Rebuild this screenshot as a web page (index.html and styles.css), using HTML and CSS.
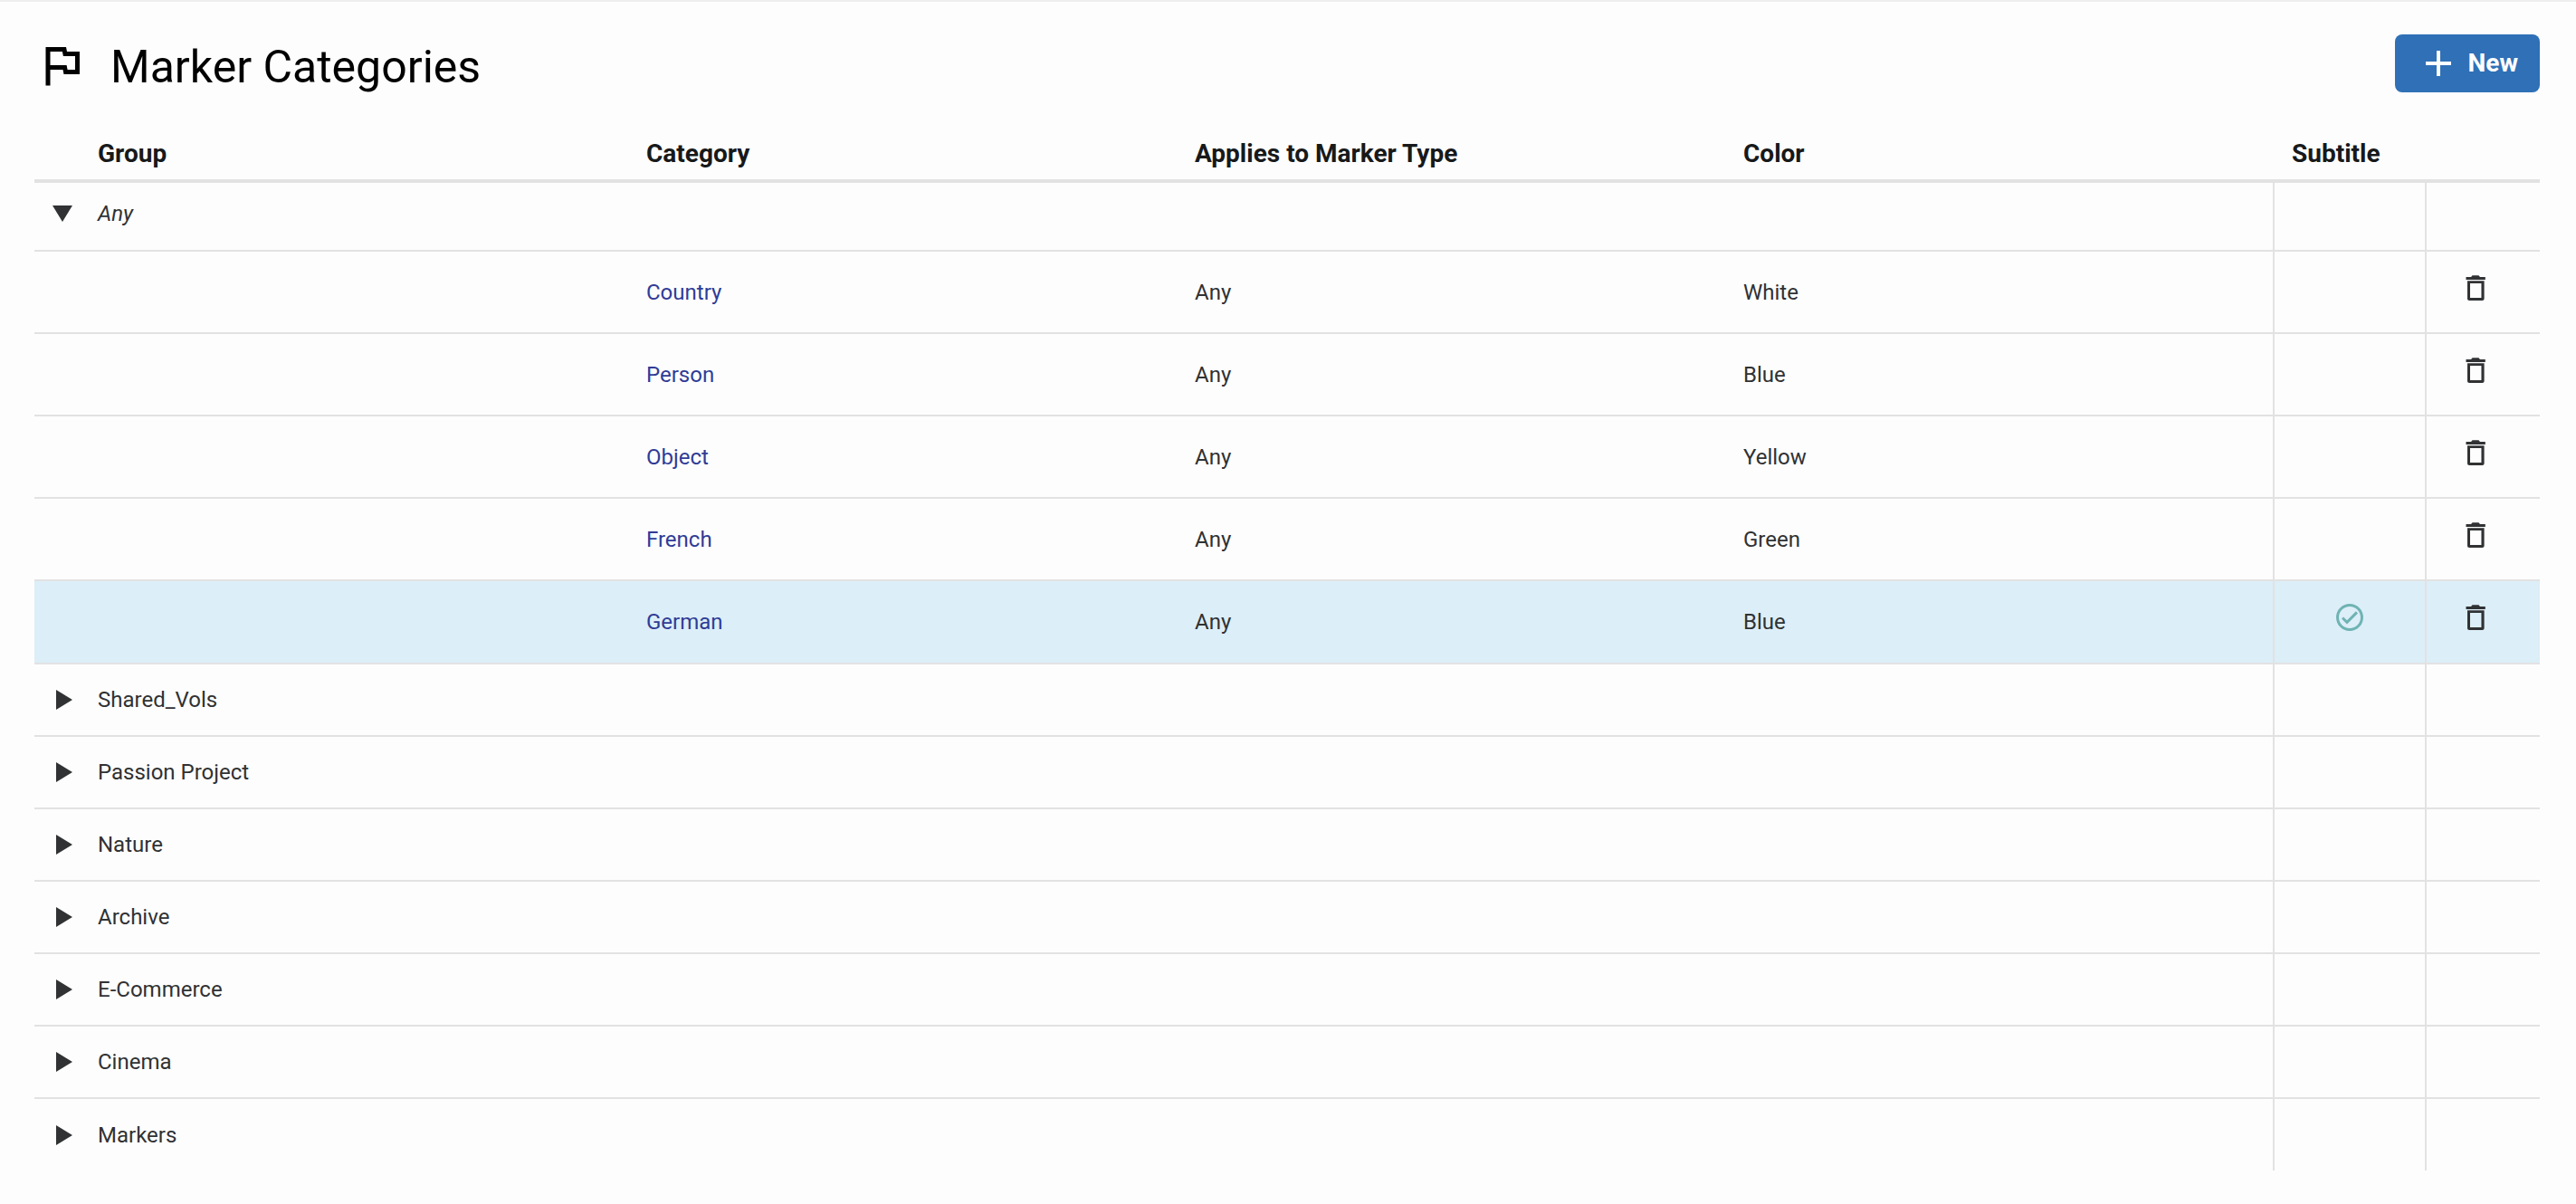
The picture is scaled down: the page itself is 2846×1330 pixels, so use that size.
FILE: index.html
```html
<!DOCTYPE html>
<html lang="en">
<head>
  <meta charset="UTF-8">
  <meta name="viewport" content="width=device-width, initial-scale=1.0">
  <title>Marker Categories</title>
  <link rel="stylesheet" href="styles.css">
</head>
<body>

  <svg class="sprite" aria-hidden="true">
    <symbol id="icon-trash" viewBox="0 0 24 24">
      <path fill-rule="evenodd" d="M5 4h3.700l1-1.200h4.600l1 1.200H19.200v2H5zM6 6.800h12.400V19.800c0 .9-.6 1.500-1.500 1.500H7.500c-.9 0-1.500-.6-1.500-1.500zM8 8.600v10.800h8.300V8.600z"/>
    </symbol>
    <symbol id="icon-check" viewBox="0 0 24 24">
      <path d="M12 2C6.480 2 2 6.480 2 12s4.480 10 10 10 10-4.480 10-10S17.520 2 12 2zm0 18c-4.410 0-8-3.590-8-8s3.590-8 8-8 8 3.590 8 8-3.590 8-8 8zm4.590-12.420L10 14.170l-2.590-2.580L6 13l4 4 8-8z"/>
    </symbol>
    <symbol id="icon-closed" viewBox="0 0 20 24">
      <path d="M0 1l18 11L0 23z"/>
    </symbol>
    <symbol id="icon-open" viewBox="0 0 22 18">
      <path d="M0 0h22L11 18z"/>
    </symbol>
  </svg>

  <main class="page">
    <header class="page-header">
      <svg class="flag" viewBox="0 0 24 24" aria-hidden="true">
        <path d="M12.360 6l.4 2H18v6h-3.360l-.4-2H7V6h5.360M14 4H5v17h2v-7h5.600l.4 2h7V6h-5.600L14 4z"/>
      </svg>
      <h1>Marker Categories</h1>
      <button class="new-btn" type="button">
        <svg viewBox="0 0 28 28" aria-hidden="true"><path d="M12 0h4v12h12v4H16v12h-4V16H0v-4h12z"/></svg>
        New
      </button>
    </header>

    <table class="categories">
      <colgroup>
        <col class="col-toggle">
        <col><col><col><col>
        <col class="col-subtitle">
        <col class="col-delete">
      </colgroup>
      <thead>
        <tr>
          <td></td>
          <th>Group</th>
          <th>Category</th>
          <th>Applies to Marker Type</th>
          <th>Color</th>
          <th>Subtitle</th>
          <td></td>
        </tr>
      </thead>
      <tbody>
        <tr class="group open">
          <td><button class="toggle" type="button" aria-label="Collapse Any"><svg><use href="#icon-open"/></svg></button></td>
          <td>Any</td><td></td><td></td><td></td><td></td><td></td>
        </tr>
        <tr class="item">
          <td></td><td></td>
          <td><a href="#country">Country</a></td><td>Any</td><td>White</td><td></td>
          <td><button class="delete" type="button" aria-label="Delete Country"><svg><use href="#icon-trash"/></svg></button></td>
        </tr>
        <tr class="item">
          <td></td><td></td>
          <td><a href="#person">Person</a></td><td>Any</td><td>Blue</td><td></td>
          <td><button class="delete" type="button" aria-label="Delete Person"><svg><use href="#icon-trash"/></svg></button></td>
        </tr>
        <tr class="item">
          <td></td><td></td>
          <td><a href="#object">Object</a></td><td>Any</td><td>Yellow</td><td></td>
          <td><button class="delete" type="button" aria-label="Delete Object"><svg><use href="#icon-trash"/></svg></button></td>
        </tr>
        <tr class="item">
          <td></td><td></td>
          <td><a href="#french">French</a></td><td>Any</td><td>Green</td><td></td>
          <td><button class="delete" type="button" aria-label="Delete French"><svg><use href="#icon-trash"/></svg></button></td>
        </tr>
        <tr class="item selected">
          <td></td><td></td>
          <td><a href="#german">German</a></td><td>Any</td><td>Blue</td>
          <td><svg class="check" role="img" aria-label="Yes"><use href="#icon-check"/></svg></td>
          <td><button class="delete" type="button" aria-label="Delete German"><svg><use href="#icon-trash"/></svg></button></td>
        </tr>
      </tbody>
      <tbody>
        <tr class="group">
          <td><button class="toggle" type="button" aria-label="Expand Shared_Vols"><svg><use href="#icon-closed"/></svg></button></td>
          <td>Shared_Vols</td><td></td><td></td><td></td><td></td><td></td>
        </tr>
        <tr class="group">
          <td><button class="toggle" type="button" aria-label="Expand Passion Project"><svg><use href="#icon-closed"/></svg></button></td>
          <td>Passion Project</td><td></td><td></td><td></td><td></td><td></td>
        </tr>
        <tr class="group">
          <td><button class="toggle" type="button" aria-label="Expand Nature"><svg><use href="#icon-closed"/></svg></button></td>
          <td>Nature</td><td></td><td></td><td></td><td></td><td></td>
        </tr>
        <tr class="group">
          <td><button class="toggle" type="button" aria-label="Expand Archive"><svg><use href="#icon-closed"/></svg></button></td>
          <td>Archive</td><td></td><td></td><td></td><td></td><td></td>
        </tr>
        <tr class="group">
          <td><button class="toggle" type="button" aria-label="Expand E-Commerce"><svg><use href="#icon-closed"/></svg></button></td>
          <td>E-Commerce</td><td></td><td></td><td></td><td></td><td></td>
        </tr>
        <tr class="group">
          <td><button class="toggle" type="button" aria-label="Expand Cinema"><svg><use href="#icon-closed"/></svg></button></td>
          <td>Cinema</td><td></td><td></td><td></td><td></td><td></td>
        </tr>
        <tr class="group">
          <td><button class="toggle" type="button" aria-label="Expand Markers"><svg><use href="#icon-closed"/></svg></button></td>
          <td>Markers</td><td></td><td></td><td></td><td></td><td></td>
        </tr>
      </tbody>
    </table>
  </main>

</body>
</html>
```
FILE: styles.css
```css
* {
  box-sizing: border-box;
}

body {
  margin: 0;
  font-family: Roboto, sans-serif;
  font-size: 24px;
  line-height: 32px;
  color: #303233;
  background-color: #fdfdfd;
  border-top: 2px solid #eee;
}

.sprite {
  display: none;
}

svg {
  display: block;
  fill: currentColor;
}

button {
  border: none;
  padding: 0;
  background: none;
  color: inherit;
  font: inherit;
  cursor: pointer;
}

.page {
  padding: 36px 40px 36px 38px;
}

/* Title bar */
.page-header {
  display: flex;
  align-items: flex-start;
  height: 102px;
}

.page-header h1 {
  flex: 1;
  margin: 0;
  font-size: 50px;
  font-weight: 400;
  line-height: 72px;
  color: #000;
}

.flag {
  width: 60px;
  height: 60px;
  margin: 4px 24px 0 0;
  fill: #000;
}

.new-btn {
  display: flex;
  align-items: center;
  gap: 19px;
  height: 64px;
  padding: 0 24px 0 34px;
  border-radius: 8px;
  background-color: #2f70b7;
  color: #fff;
  font-size: 28px;
  font-weight: 700;
}

.new-btn svg {
  width: 28px;
  height: 28px;
}

/* Table */
.categories {
  width: 100%;
  table-layout: fixed;
  border-collapse: collapse;
}

.col-toggle {
  width: 50px;
}

.col-subtitle {
  width: 168px;
}

.col-delete {
  width: 126px;
}

.categories th {
  height: 60px;
  padding: 2px 20px 0;
  text-align: left;
  font-size: 28px;
  font-weight: 700;
  color: #17191a;
  white-space: nowrap;
}

.categories thead tr {
  border-bottom: 4px solid #e2e2e2;
}

.categories tbody tr {
  border-bottom: 2px solid #e2e2e2;
}

.categories tbody:last-child tr:last-child {
  border-bottom: none;
}

.categories tbody td {
  padding: 0 20px;
}

.categories tbody td:first-child {
  padding: 0;
}

.categories tbody td:nth-child(n+6) {
  border-left: 2px solid #e2e2e2;
  padding-bottom: 10px;
}

.group {
  height: 80px;
}

.categories .open {
  height: 77px;
}

.categories .open td,
.categories .open td:first-child {
  padding-bottom: 6px;
  font-style: italic;
}

.item {
  height: 91px;
}

.item.selected {
  height: 92px;
  background-color: #dceef8;
}

.item a {
  color: #303c96;
  text-decoration: none;
}

.toggle {
  display: block;
  margin-left: 24px;
}

.toggle svg {
  width: 20px;
  height: 24px;
}

.open .toggle {
  margin-left: 20px;
}

.open .toggle svg {
  width: 22px;
  height: 18px;
}

.delete,
.check {
  display: block;
  margin: 0 auto;
}

.delete {
  margin-left: 16px;
}

.delete svg,
.check {
  width: 36px;
  height: 36px;
}

.check {
  color: #6fb3b3;
}
```
